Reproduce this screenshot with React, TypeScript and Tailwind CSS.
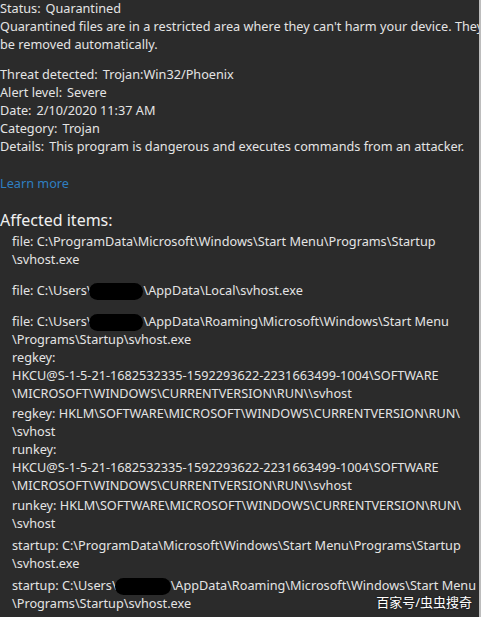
import React from "react";

const Blot = ({ w = 54 }: { w?: number }) => (
  <span
    className="inline-block h-[17px] rounded-full bg-black align-middle -my-1 -ml-[2px]"
    style={{ width: w }}
  />
);

const Row = ({ label, value }: { label: string; value: string }) => (
  <div className="whitespace-nowrap">
    {label}
    <span className="ml-[5px]">{value}</span>
  </div>
);

const App = () => {
  return (
    <div
      className="relative h-[617px] w-[481px] overflow-hidden bg-[#2b2b2b] text-[12.7px] leading-[18px] text-[#e4e4e4]"
      style={{ fontFamily: '"Noto Sans", "Noto Sans CJK SC", sans-serif' }}
    >
      <div className="flex h-full">
        <div className="w-[479px] overflow-hidden">
          <div className="-mt-[1px]">
            <Row label="Status:" value="Quarantined" />
            <div className="whitespace-nowrap">
              Quarantined files are in a restricted area where they can't harm your device. They will
            </div>
            <div className="whitespace-nowrap">be removed automatically.</div>
          </div>

          <div className="mt-[12px]">
            <Row label="Threat detected:" value="Trojan:Win32/Phoenix" />
            <Row label="Alert level:" value="Severe" />
            <Row label="Date:" value="2/10/2020 11:37 AM" />
            <Row label="Category:" value="Trojan" />
            <Row label="Details:" value="This program is dangerous and executes commands from an attacker." />
          </div>

          <div className="mt-[19px] text-[#2f7fc1]">Learn more</div>

          <div className="mt-[18px] text-[16px] leading-[20px] text-[#f0f0f0]">Affected items:</div>

          <div className="pl-[12px] whitespace-nowrap">
            <div className="mt-[2px]">
              <div>file: C:\ProgramData\Microsoft\Windows\Start Menu\Programs\Startup</div>
              <div>\svhost.exe</div>
            </div>
            <div className="mt-[13px]">
              file: C:\Users\<Blot />\AppData\Local\svhost.exe
            </div>
            <div className="mt-[13px]">
              <div>
                file: C:\Users\<Blot />\AppData\Roaming\Microsoft\Windows\Start Menu
              </div>
              <div>\Programs\Startup\svhost.exe</div>
            </div>
            <div>
              <div>regkey:</div>
              <div>HKCU@S-1-5-21-1682532335-1592293622-2231663499-1004\SOFTWARE</div>
              <div>\MICROSOFT\WINDOWS\CURRENTVERSION\RUN\\svhost</div>
            </div>
            <div className="mt-[2px]">
              <div>regkey: HKLM\SOFTWARE\MICROSOFT\WINDOWS\CURRENTVERSION\RUN\</div>
              <div>\svhost</div>
            </div>
            <div>
              <div>runkey:</div>
              <div>HKCU@S-1-5-21-1682532335-1592293622-2231663499-1004\SOFTWARE</div>
              <div>\MICROSOFT\WINDOWS\CURRENTVERSION\RUN\\svhost</div>
            </div>
            <div className="mt-[2px]">
              <div>runkey: HKLM\SOFTWARE\MICROSOFT\WINDOWS\CURRENTVERSION\RUN\</div>
              <div>\svhost</div>
            </div>
            <div className="mt-[4px]">
              <div>startup: C:\ProgramData\Microsoft\Windows\Start Menu\Programs\Startup</div>
              <div>\svhost.exe</div>
            </div>
            <div className="mt-[4px]">
              <div>
                startup: C:\Users\<Blot w={56} />\AppData\Roaming\Microsoft\Windows\Start Menu
              </div>
              <div>\Programs\Startup\svhost.exe</div>
            </div>
          </div>
        </div>
        <div className="w-[2px] bg-[#bdbdbd]" />
      </div>

      <div className="absolute bottom-[7px] right-[9px] text-[13px] leading-[16px] text-white [text-shadow:0_0_2px_rgba(0,0,0,0.8)]">
        百家号/虫虫搜奇
      </div>
    </div>
  );
};

export default App;
